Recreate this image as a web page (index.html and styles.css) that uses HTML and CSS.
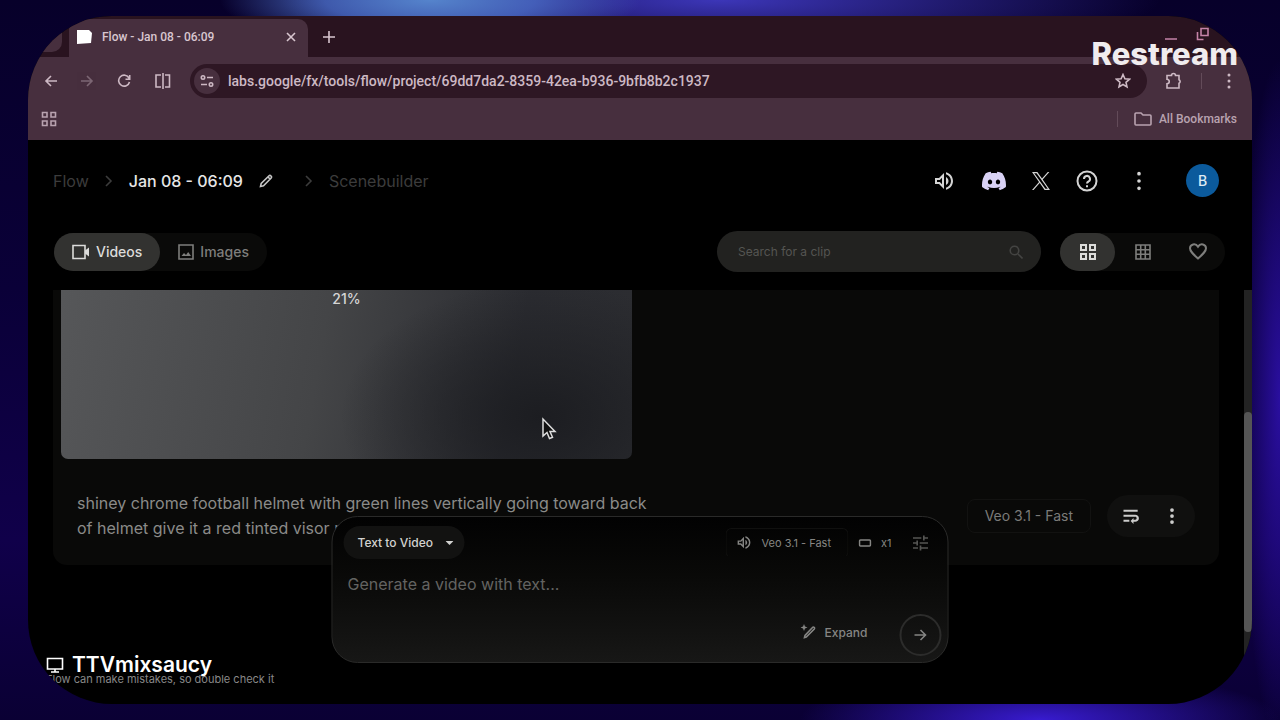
FILE: index.html
```html
<!DOCTYPE html>
<html lang="en">
<head>
  <meta charset="UTF-8">
  <meta name="viewport" content="width=device-width, initial-scale=1.0">
  <title>Flow - Jan 08 - 06:09</title>
  <link rel="stylesheet" href="styles.css">
</head>
<body>
  <div class="stage">
    <!-- browser window -->
    <div class="tab-strip">
      <div class="tab-previous"></div>
      <div class="tab">
        <svg class="favicon" width="17" height="16" viewBox="0 0 17 16"><path d="M1 1l12 0 3 3-1 10-14 1z" fill="#fff"/></svg>
        <span class="tab-title">Flow - Jan 08 - 06:09</span>
        <button class="tab-close" aria-label="Close tab"><svg width="10" height="10" viewBox="0 0 10 10"><path d="M1 1l8 8M9 1L1 9" class="line"/></svg></button>
      </div>
      <button class="tab-new" aria-label="New tab"><svg width="12" height="12" viewBox="0 0 12 12"><path d="M6 0v12M0 6h12" class="line"/></svg></button>
      <div class="window-buttons">
        <button aria-label="Minimize"><svg width="14" height="14" viewBox="0 0 14 14"><path d="M1 12h12" class="line"/></svg></button>
        <button aria-label="Restore"><svg width="14" height="14" viewBox="0 0 14 14"><path d="M5 1.500h7v7h-7zM1.500 5v7.500h6" class="line"/></svg></button>
      </div>
    </div>

    <div class="toolbar">
      <button aria-label="Back"><svg width="14" height="14" viewBox="0 0 14 14"><path d="M13 7H2M7 2L2 7l5 5" class="line"/></svg></button>
      <button class="faded" aria-label="Forward"><svg width="14" height="14" viewBox="0 0 14 14"><path d="M1 7h11M7 2l5 5-5 5" class="line"/></svg></button>
      <button aria-label="Reload"><svg width="16" height="14" viewBox="-1 0 16 14"><path d="M12 4A5.500 5.500 0 1 0 12.500 8M12.700 1v4.200H8.500" class="line"/></svg></button>
      <button aria-label="Split view"><svg width="18" height="18" viewBox="0 0 18 18"><path d="M7 3H2v12h5M9 1v16M11 3h4.500v12H11" class="line"/></svg></button>
      <div class="address">
        <button class="site-info" aria-label="Site information"><svg width="14" height="14" viewBox="0 0 14 14"><circle cx="3" cy="3.500" r="1.700" class="line"/><circle cx="11" cy="10.500" r="1.700" class="line"/><path d="M7 3.500h6M1 10.500h6" class="line"/></svg></button>
        <input class="url" type="text" aria-label="Address" value="labs.google/fx/tools/flow/project/69dd7da2-8359-42ea-b936-9bfb8b2c1937">
        <button aria-label="Bookmark this tab"><svg width="16" height="16" viewBox="0 0 16 16"><path d="M8 1.500l1.900 4.300 4.600.4-3.500 3.100 1 4.600L8 11.500l-4 2.400 1-4.600L1.500 6.200l4.600-.4z" class="line"/></svg></button>
      </div>
      <button class="extensions" aria-label="Extensions"><svg width="18" height="18" viewBox="0 0 18 18"><path d="M2 3.500h4.500a2 2 0 0 1 4 0H14v4.200a2 2 0 0 1 0 3.600V16H2v-4.200c3-.3 3-4.300 0-4.600z" class="line"/></svg></button>
      <span class="divider"></span>
      <button class="menu" aria-label="Browser menu"><svg width="18" height="18" viewBox="0 0 24 24"><path d="M12 2a2 2 0 1 0 0 4 2 2 0 0 0 0-4zm0 8a2 2 0 1 0 0 4 2 2 0 0 0 0-4zm0 8a2 2 0 1 0 0 4 2 2 0 0 0 0-4z" class="solid"/></svg></button>
    </div>

    <div class="bookmarks">
      <button aria-label="Apps"><svg width="16" height="16" viewBox="0 0 16 16"><path d="M1.500 1.500H6V6H1.500zM10 1.500h4.500V6H10zM1.500 10H6v4.500H1.500zM10 10h4.500v4.500H10z" class="line"/></svg></button>
      <span class="divider"></span>
      <button class="all-bookmarks"><svg width="18" height="14" viewBox="0 0 18 14"><path d="M1 2a1 1 0 0 1 1-1h5l2 2h7a1 1 0 0 1 1 1v8a1 1 0 0 1-1 1H2a1 1 0 0 1-1-1z" class="line"/></svg>All Bookmarks</button>
    </div>

    <!-- flow app -->
    <div class="app">
      <header class="app-header">
        <nav class="breadcrumb">
          <a href="#">Flow</a>
          <svg width="8" height="12" viewBox="0 0 8 12"><path d="M1 1l5 5-5 5" class="line"/></svg>
          <span class="project-name">Jan 08 - 06:09</span>
          <button class="rename" aria-label="Rename project"><svg width="14" height="14" viewBox="0 0 14 14"><path d="M1.500 12.500l.7-3L9.800 2a1.500 1.500 0 0 1 2.200 2.200l-7.500 7.600zM9 3l2 2" class="line"/></svg></button>
          <svg width="8" height="12" viewBox="0 0 8 12"><path d="M1 1l5 5-5 5" class="line"/></svg>
          <a href="#">Scenebuilder</a>
        </nav>
        <div class="header-links">
          <button aria-label="Sound"><svg width="24" height="24" viewBox="0 0 24 24"><path d="M3 9v6h4l5 5V4L7 9H3zm7-.17v6.340L7.830 13H5v-2h2.830L10 8.830zM16.500 12c0-1.770-1.020-3.290-2.500-4.030v8.050c1.480-.73 2.500-2.250 2.500-4.020zM14 3.230v2.060c2.890.86 5 3.540 5 6.710s-2.110 5.850-5 6.710v2.060c4.010-.91 7-4.490 7-8.770s-2.990-7.860-7-8.770z" class="solid"/></svg></button>
          <a class="discord" href="#" aria-label="Discord"><svg width="24" height="24" viewBox="0 0 24 24"><path d="M20.317 4.370a19.800 19.800 0 0 0-4.885-1.515c-.2.300-.5.900-.687 1.286-1.845-.276-3.680-.276-5.487 0-.164-.393-.5-1-.696-1.286a19.700 19.700 0 0 0-4.885 1.515C.533 9.046-.319 13.580.099 18.058c2.084 1.564 4.072 2.479 6.077 3.085.5-.650.900-1.350 1.268-2.050-.8-.300-1.400-.600-2-1l.45-.4c3.928 1.793 8.180 1.793 12.140 0l.45.400c-.6.400-1.200.700-2 1 .4.750.8 1.400 1.300 2.050 2-.6 4-1.500 6.100-3.100.5-5.177-.838-9.674-3.567-13.673zM8.020 15.331c-1.183 0-2.157-1.086-2.157-2.419s.956-2.419 2.157-2.419c1.211 0 2.176 1.095 2.157 2.419 0 1.333-.956 2.419-2.157 2.419zm7.975 0c-1.183 0-2.157-1.086-2.157-2.419s.955-2.419 2.157-2.419c1.211 0 2.176 1.095 2.157 2.419 0 1.333-.946 2.419-2.157 2.419z" class="solid"/></svg></a>
          <a href="#" aria-label="X"><svg width="18" height="18" viewBox="0 0 24 24"><path d="M14.258 10.152 23.176 0h-2.113l-7.747 8.813L7.133 0H0l9.352 13.328L0 23.973h2.113l8.176-9.309 6.531 9.309h7.133zm-2.895 3.293-.949-1.328L2.875 1.560h3.246l6.086 8.523.945 1.328 7.910 11.078h-3.246z" class="solid"/></svg></a>
          <button aria-label="Help"><svg width="22" height="22" viewBox="0 0 22 22"><g stroke-width="2" fill="none" stroke="currentColor"><circle cx="11" cy="11" r="9.500"/><path d="M8 9a3 3 0 1 1 4.500 2.500C11.500 12 11 12.500 11 13.500M11 15.200v2"/></g></svg></button>
          <button class="more" aria-label="More"><svg width="22" height="22" viewBox="0 0 24 24"><path d="M12 2a2 2 0 1 0 0 4 2 2 0 0 0 0-4zm0 8a2 2 0 1 0 0 4 2 2 0 0 0 0-4zm0 8a2 2 0 1 0 0 4 2 2 0 0 0 0-4z" class="solid"/></svg></button>
          <button class="avatar">B</button>
        </div>
      </header>

      <div class="filters">
        <div class="switch">
          <button class="switch-item active"><svg width="18" height="16" viewBox="0 0 18 16"><path d="M1 1.500h12v13H1z" class="line"/><path d="M13 6.500l4-3v9l-4-3z" class="solid"/></svg>Videos</button>
          <button class="switch-item"><svg width="16" height="16" viewBox="0 0 16 16"><path d="M1 1h14v14H1z" class="line"/><path d="M3.500 12l2.500-3 2 2 2.200-3 2.800 4z" class="solid"/></svg>Images</button>
        </div>
        <label class="search">
          <input type="text" placeholder="Search for a clip" aria-label="Search for a clip">
          <svg width="14" height="14" viewBox="0 0 14 14"><circle cx="5.500" cy="5.500" r="4.300" class="line"/><path d="M9 9l4.500 4.500" class="line"/></svg>
        </label>
        <div class="switch views">
          <button class="switch-item active" aria-label="Large grid"><svg width="16" height="16" viewBox="0 0 16 16"><path d="M1 1h5v5H1zM10 1h5v5h-5zM1 10h5v5H1zM10 10h5v5h-5z" fill="none" stroke="currentColor" stroke-width="2"/></svg></button>
          <button class="switch-item" aria-label="Small grid"><svg width="16" height="16" viewBox="0 0 16 16"><path d="M1 1h14v14H1zM1 5.700h14M1 10.300h14M5.700 1v14M10.300 1v14" class="line"/></svg></button>
          <button class="switch-item" aria-label="Favorites"><svg width="18" height="17" viewBox="0 0 18 17"><path d="M9 15.500C4 11 1 8.500 1 5.300 1 1.300 6.500-.3 9 3.700c2.500-4 8-2.400 8 1.600 0 3.200-3 5.700-8 10.200z" fill="none" stroke="currentColor" stroke-width="2"/></svg></button>
        </div>
      </div>

      <main class="clips">
        <section class="clip-card">
          <div class="clip-preview">21%</div>
          <div class="clip-info">
            <p class="clip-prompt">shiney chrome football helmet with green lines vertically going toward back of helmet give it a red tinted visor r</p>
            <div class="clip-meta">
              <span class="model">Veo 3.1 - Fast</span>
              <div class="clip-actions">
                <button aria-label="Reuse prompt"><svg width="20" height="20" viewBox="0 0 24 24"><path d="M3 19h7v-2.500H3v2.500zM20 4.500H3v2.500h17V4.500zm-3 6H3v2.500h14.250c1 0 1.500.8 1.500 1.700s-.6 1.800-1.500 1.800H15v-2l-3.500 3.500 3.500 3.500v-2.500h2c2.500 0 4.500-1.790 4.500-4.300s-2-4.200-4.500-4.200z" class="solid"/></svg></button>
                <button aria-label="More"><svg width="18" height="18" viewBox="0 0 24 24"><path d="M12 1.500a2.500 2.500 0 1 0 0 5 2.500 2.500 0 0 0 0-5zm0 8a2.500 2.500 0 1 0 0 5 2.500 2.500 0 0 0 0-5zm0 8a2.500 2.500 0 1 0 0 5 2.500 2.500 0 0 0 0-5z" class="solid"/></svg></button>
              </div>
            </div>
          </div>
        </section>
        <div class="scrollbar"><div class="scrollbar-thumb"></div></div>
        <p class="notice">Flow can make mistakes, so double check it</p>
      </main>

      <form class="composer">
        <div class="composer-top">
          <button type="button" class="mode">Text to Video <svg width="8" height="4" viewBox="0 0 8 4"><path d="M0 0h8L4 4z" class="solid"/></svg></button>
          <button type="button" class="composer-model"><svg width="17" height="17" viewBox="0 0 24 24"><path d="M3 9v6h4l5 5V4L7 9H3zm7-.17v6.340L7.830 13H5v-2h2.830L10 8.830zM16.500 12c0-1.770-1.020-3.290-2.500-4.030v8.050c1.480-.73 2.500-2.250 2.500-4.020zM14 3.230v2.060c2.890.86 5 3.540 5 6.710s-2.110 5.850-5 6.710v2.060c4.010-.91 7-4.490 7-8.770s-2.990-7.860-7-8.770z" class="solid"/></svg>Veo 3.1 - Fast</button>
          <span class="count"><svg width="13" height="8" viewBox="0 0 13 8"><rect x="1" y="1" width="11" height="6" rx="1" class="line"/></svg>x1</span>
          <button type="button" class="settings" aria-label="Settings"><svg width="20" height="20" viewBox="0 0 24 24"><path d="M3 17v2h6v-2H3zM3 5v2h10V5H3zm10 16v-2h8v-2h-8v-2h-2v6h2zM7 9v2H3v2h4v2h2V9H7zm14 4v-2H11v2h10zm-6-4h2V7h4V5h-4V3h-2v6z" class="solid"/></svg></button>
        </div>
        <textarea class="prompt-input" placeholder="Generate a video with text..." aria-label="Prompt"></textarea>
        <div class="composer-bottom">
          <button type="button" class="expand"><svg width="16" height="16" viewBox="0 0 16 16"><path d="M4 13.500l.5-2L12 3.500a1 1 0 0 1 1.800 1.500l-8 8z" class="line"/><path d="M3.500 0l1 2.500 2.500 1-2.500 1-1 2.500-1-2.500-2.500-1 2.500-1z" class="solid"/></svg>Expand</button>
          <button class="send" aria-label="Create"><svg width="14" height="14" viewBox="0 0 14 14"><path d="M1 7h11M7 2l5 5-5 5" class="line"/></svg></button>
        </div>
      </form>
    </div>

    <svg class="cursor" width="16" height="24" viewBox="0 0 16 24"><path d="M2 2v17l4-3.500 2.500 6 3-1.200L9 14.500h5z" fill="#111" stroke="#ddd" stroke-width="1.500"/></svg>
    <div class="streamer">
      <svg width="18" height="18" viewBox="0 0 18 18"><path d="M1.500 2.500h15v10.500h-15zM9 13v3M5 16h8" class="line"/></svg>
      <span>TTVmixsaucy</span>
    </div>
  </div>
  <div class="watermark">Restream</div>
</body>
</html>
```
FILE: styles.css
```css
* {
  box-sizing: border-box;
}

body {
  margin: 0;
  height: 100vh;
  padding: 16px 28px;
  position: relative;
  overflow: hidden;
  font-family: Roboto, "Liberation Sans", sans-serif;
  background:
    radial-gradient(ellipse 210px 50px at 430px 0, #5584cc, rgba(75, 110, 200, 0.8) 50%, transparent),
    radial-gradient(ellipse 440px 60px at 720px 0, #3c36b8, transparent),
    radial-gradient(ellipse 240px 50px at 1040px 100%, #381bd0, transparent),
    radial-gradient(ellipse 40px 340px at 100% 400px, #2a0fa0, transparent),
    linear-gradient(to bottom, #07002a, #0a0038 40%, #10004a 75%, #0a0034);
}

button {
  border: none;
  padding: 0;
  background: none;
  color: inherit;
  font: inherit;
  display: flex;
  align-items: center;
  justify-content: center;
}

input,
textarea {
  border: none;
  padding: 0;
  background: none;
  color: inherit;
  font: inherit;
  min-width: 0;
}

a {
  color: inherit;
  text-decoration: none;
}

svg {
  display: block;
  flex: none;
}

.line {
  fill: none;
  stroke: currentColor;
  stroke-width: 1.6;
}

.solid {
  fill: currentColor;
}

.stage {
  height: 100%;
  display: flex;
  flex-direction: column;
  position: relative;
  overflow: hidden;
  border-radius: 84px;
  background: #000;
}

/* browser */
.tab-strip {
  height: 41px;
  flex: none;
  display: flex;
  align-items: center;
  background: #29131f;
  color: #d8c6cf;
}

.tab-previous {
  width: 34px;
  height: 30px;
  border-radius: 10px;
  background: #472f3e;
}

.tab {
  width: 239px;
  height: 41px;
  margin: 6px 0 0 7px;
  padding: 0 12px 6px 7px;
  display: flex;
  align-items: center;
  gap: 9px;
  border-radius: 10px 10px 0 0;
  background: #472f3e;
  font-size: 12px;
  font-weight: 500;
}

.tab-title {
  flex: 1;
}

.tab-new {
  margin-left: 15px;
}

.window-buttons {
  margin-left: auto;
  padding: 0 42px 6px 0;
  display: flex;
  gap: 18px;
  color: #c583a8;
}

.toolbar {
  height: 48px;
  flex: none;
  padding: 0 14px 0 16px;
  display: flex;
  align-items: center;
  gap: 22px;
  background: #472f3e;
  color: #cdb9c4;
}

.faded {
  opacity: 0.4;
}

.address {
  flex: 1;
  height: 34px;
  margin: 0 -4px;
  padding: 0 16px 0 4px;
  display: flex;
  align-items: center;
  gap: 8px;
  border-radius: 17px;
  background: #2e1724;
}

.site-info {
  width: 26px;
  height: 26px;
  border-radius: 50%;
  background: #472f3e;
}

.url {
  flex: 1;
  font-size: 14px;
  font-weight: 500;
}

.divider {
  width: 1px;
  height: 16px;
  background: #634b59;
}

.toolbar .divider {
  margin: 0 -4px;
}

.bookmarks {
  height: 35px;
  flex: none;
  padding: 0 15px 8px 13px;
  display: flex;
  align-items: center;
  gap: 16px;
  background: #472f3e;
  color: #b9a3b0;
  font-size: 12px;
  font-weight: 500;
}

.bookmarks .divider {
  margin-left: auto;
}

.all-bookmarks {
  gap: 7px;
}

/* app */
.app {
  flex: 1;
  min-height: 0;
  display: flex;
  flex-direction: column;
  position: relative;
  font-family: Inter, "Liberation Sans", sans-serif;
}

.app-header {
  height: 81px;
  flex: none;
  padding: 0 33px 0 25px;
  display: flex;
  align-items: center;
  justify-content: space-between;
}

.breadcrumb {
  display: flex;
  align-items: center;
  gap: 16px;
  color: #3c3c3c;
  font-size: 16px;
}

.project-name {
  color: #e6e6e6;
  font-weight: 500;
}

.rename {
  margin-right: 16px;
  color: #c4c4c4;
}

.header-links {
  display: flex;
  align-items: center;
  gap: 26px;
  color: #d4d4d4;
}

.discord {
  color: #d9d2f5;
}

.more {
  margin-left: 4px;
}

.avatar {
  width: 33px;
  height: 33px;
  margin-left: 10px;
  border-radius: 50%;
  background: #0b5a9c;
  color: #e0ecf5;
  font-size: 14px;
  font-weight: 500;
}

.filters {
  height: 69px;
  flex: none;
  padding: 0 27px 8px 26px;
  display: flex;
  align-items: center;
}

.switch {
  display: flex;
  border-radius: 20px;
  background: #0a0a09;
  color: #7e7e7c;
  font-size: 14px;
  font-weight: 500;
}

.switch-item {
  height: 38px;
  padding: 0 18px;
  gap: 6px;
  border-radius: 19px;
}

.switch-item.active {
  background: #323230;
  color: #dcdcda;
}

.search {
  width: 324px;
  height: 41px;
  margin-left: auto;
  padding: 0 18px 0 21px;
  display: flex;
  align-items: center;
  border-radius: 21px;
  background: #222220;
  color: #444442;
  font-size: 12px;
}

.search input {
  flex: 1;
}

.search input::placeholder {
  color: #555552;
}

.views {
  margin-left: 19px;
}

.views .switch-item {
  width: 55px;
  padding: 0;
}

.clips {
  flex: 1;
  min-height: 0;
  padding: 0 33px 17px 25px;
  display: flex;
  flex-direction: column;
  justify-content: space-between;
  position: relative;
}

.clip-card {
  padding: 0 24px 24px 8px;
  border-radius: 0 0 14px 14px;
  background: #090908;
}

.clip-preview {
  width: calc(50% + 4px);
  height: 169px;
  border-radius: 0 0 7px 7px;
  background:
    radial-gradient(ellipse 35% 80% at 84% 75%, #1c1d21, transparent),
    linear-gradient(100deg, #565759, #444547 45%, #2b2c31 78%, #2c2d31);
  color: #d5d5d5;
  text-align: center;
  font-size: 14px;
  font-weight: 500;
  line-height: 18px;
}

.clip-info {
  margin-top: 32px;
  padding-left: 16px;
  display: flex;
  justify-content: space-between;
}

.clip-prompt {
  width: 580px;
  margin: 0;
  color: #8b8b89;
  font-size: 16px;
  line-height: 25px;
}

.clip-meta {
  display: flex;
  align-items: center;
  gap: 16px;
}

.model {
  padding: 0 17px;
  border: 1px solid #121211;
  border-radius: 8px;
  color: #7b7b79;
  font-size: 14px;
  line-height: 32px;
}

.clip-actions {
  height: 42px;
  padding: 0 14px;
  display: flex;
  gap: 22px;
  border-radius: 21px;
  background: #10100f;
  color: #cccccb;
}

.scrollbar {
  width: 8px;
  height: 100%;
  padding-top: 122px;
  position: absolute;
  top: 0;
  right: 0;
  background: #232323;
}

.scrollbar-thumb {
  height: 220px;
  border-radius: 4px;
  background: #555;
}

.notice {
  margin: 0 0 0 -7px;
  color: #888;
  font-size: 11px;
  line-height: 16px;
}

/* prompt box, floats over the clips */
.composer {
  width: 617px;
  height: 147px;
  padding: 9px 6px 6px 11px;
  position: absolute;
  bottom: 41px;
  left: 50%;
  transform: translateX(-50%);
  display: flex;
  flex-direction: column;
  border: 1px solid #2a2a29;
  border-radius: 26px;
  background: linear-gradient(#020202, #090908 40%, #171716);
  color: #858583;
}

.composer-top {
  display: flex;
  align-items: center;
  font-size: 11px;
}

.mode {
  height: 33px;
  padding: 0 11px 0 14px;
  gap: 12px;
  border-radius: 17px;
  background: #121211;
  color: #d2d2d0;
  font-size: 12px;
  font-weight: 500;
}

.composer-model {
  height: 30px;
  margin-left: auto;
  padding: 0 16px 0 9px;
  gap: 9px;
  border: 1px solid #10100f;
  border-bottom-color: transparent;
  border-radius: 6px;
}

.count {
  margin-left: 10px;
  display: flex;
  align-items: center;
  gap: 10px;
}

.settings {
  margin: 0 11px 0 19px;
  color: #555553;
}

.prompt-input {
  flex: 1;
  margin: 14px 4px 0;
  outline: none;
  resize: none;
  font-size: 16px;
  line-height: 22px;
}

.prompt-input::placeholder {
  color: #636361;
}

.composer-bottom {
  display: flex;
  align-items: center;
  justify-content: flex-end;
  gap: 32px;
}

.expand {
  padding-bottom: 6px;
  gap: 8px;
  font-size: 12px;
  font-weight: 500;
}

.send {
  width: 42px;
  height: 42px;
  border: 2px solid #2c2c2b;
  border-radius: 50%;
}

/* overlays */
.cursor {
  position: absolute;
  top: 401px;
  left: 513px;
}

.streamer {
  position: absolute;
  left: 18px;
  bottom: 26px;
  display: flex;
  align-items: center;
  gap: 8px;
  color: #fff;
  font-family: Inter, "Liberation Sans", sans-serif;
  font-size: 21px;
  font-weight: 600;
  line-height: 26px;
}

.watermark {
  position: absolute;
  top: 36px;
  right: 42px;
  color: #f0ecee;
  font-family: Inter, "Liberation Sans", sans-serif;
  font-size: 31px;
  font-weight: 800;
  line-height: 36px;
}
```
